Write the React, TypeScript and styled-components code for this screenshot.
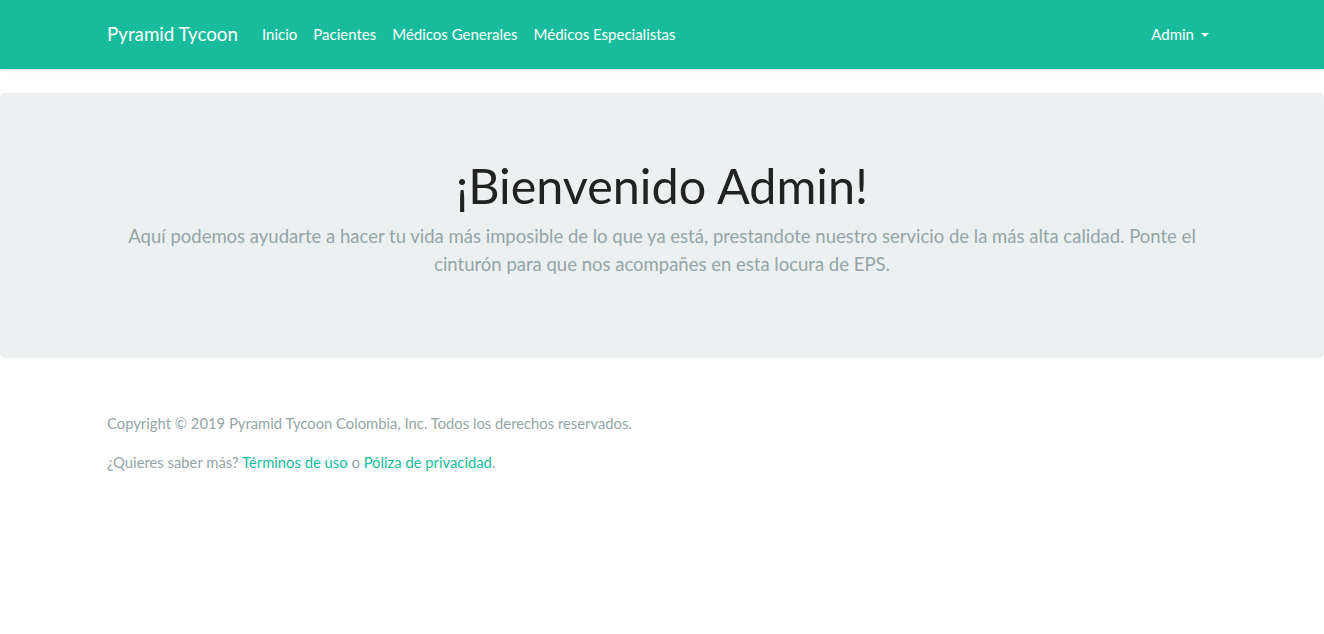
import React from "react";
import styled, { createGlobalStyle } from "styled-components";

const Global = createGlobalStyle`
  * { box-sizing: border-box; }
  body {
    margin: 0;
    font-family: Lato, "Noto Sans", sans-serif;
    font-size: 15px;
    line-height: 1.5;
    color: #212529;
    background: #fff;
  }
`;

const Navbar = styled.nav`
  background: #18bc9c;
  height: 69px;
  box-shadow: 0 1px 4px rgba(0, 0, 0, 0.12);
  display: flex;
  align-items: center;
`;

const Container = styled.div`
  width: 1140px;
  margin: 0 auto;
  padding: 0 15px;
  display: flex;
  align-items: center;
`;

const Brand = styled.a`
  color: #fff;
  font-size: 18.75px;
  line-height: 1.5;
  margin-right: 16px;
  text-decoration: none;
`;

const NavList = styled.ul<{ $grow?: boolean }>`
  list-style: none;
  display: flex;
  margin: 0;
  padding: 0;
  flex: ${(p) => (p.$grow ? 1 : "none")};
`;

const NavLink = styled.a`
  display: flex;
  align-items: center;
  color: #fff;
  text-decoration: none;
  padding: 8px;
  font-size: 15px;
`;

const Caret = styled.span`
  display: inline-block;
  margin-left: 7px;
  width: 0;
  height: 0;
  border-top: 4.5px solid #fff;
  border-left: 4.5px solid transparent;
  border-right: 4.5px solid transparent;
`;

const Jumbotron = styled.section`
  margin-top: 24px;
  margin-bottom: 32px;
  background: #ecf0f1;
  border-radius: 4.8px;
  padding: 64px 32px;
  text-align: center;
`;

const Title = styled.h1`
  margin: 0 0 8px;
  font-size: 48.5px;
  font-weight: 400;
  line-height: 57px;
  color: #222;
`;

const Lead = styled.p`
  margin: 0 auto 16px;
  max-width: 1110px;
  font-size: 18.5px;
  line-height: 28px;
  color: #95a5a6;
`;

const Footer = styled.footer`
  width: 1140px;
  margin: 0 auto;
  padding: 22px 15px 0;
`;

const FootText = styled.p`
  margin: 0 0 16px;
  color: #95a5a6;
  font-size: 14.8px;
  line-height: 22.5px;
`;

const FootLink = styled.a`
  color: #18bc9c;
  text-decoration: none;
`;

export default function App() {
  return (
    <>
      <Global />
      <Navbar>
        <Container>
          <Brand href="#">Pyramid Tycoon</Brand>
          <NavList $grow>
            <li><NavLink href="#">Inicio</NavLink></li>
            <li><NavLink href="#">Pacientes</NavLink></li>
            <li><NavLink href="#">Médicos Generales</NavLink></li>
            <li><NavLink href="#">Médicos Especialistas</NavLink></li>
          </NavList>
          <NavList>
            <li>
              <NavLink href="#">
                Admin<Caret />
              </NavLink>
            </li>
          </NavList>
        </Container>
      </Navbar>
      <Jumbotron>
        <Title>¡Bienvenido Admin!</Title>
        <Lead>
          Aquí podemos ayudarte a hacer tu vida más imposible de lo que ya está, prestandote nuestro servicio de la más alta calidad. Ponte el cinturón para que nos acompañes en esta locura de EPS.
        </Lead>
      </Jumbotron>
      <Footer>
        <FootText>Copyright © 2019 Pyramid Tycoon Colombia, Inc. Todos los derechos reservados.</FootText>
        <FootText>
          ¿Quieres saber más? <FootLink href="#">Términos de uso</FootLink> o{" "}
          <FootLink href="#">Póliza de privacidad</FootLink>.
        </FootText>
      </Footer>
    </>
  );
}
